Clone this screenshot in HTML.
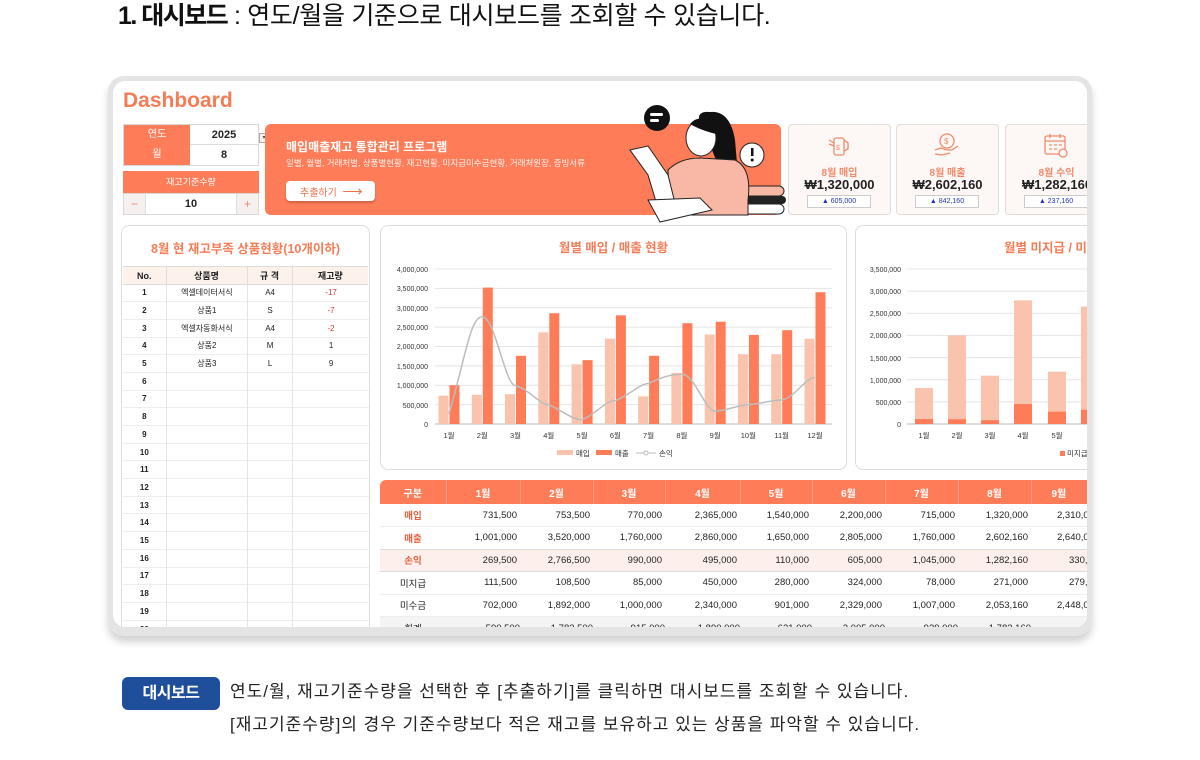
<!DOCTYPE html>
<html><head><meta charset="utf-8">
<style>
*{margin:0;padding:0;box-sizing:border-box}
body{width:1200px;height:760px;background:#fff;position:relative;overflow:hidden;font-family:"Liberation Sans","Noto Sans CJK KR",sans-serif;color:#222}
.a{position:absolute}
.t{position:absolute;white-space:nowrap}
.or{background:#ff7c59;color:#fff}
table{border-collapse:collapse}
</style></head><body>

<div class="t" style="left:118px;top:0px;font-size:25px;letter-spacing:-0.3px;line-height:32px;color:#111"><b style="letter-spacing:-1.5px">1. 대시보드</b> : 연도/월을 기준으로 대시보드를 조회할 수 있습니다.</div>

<!-- frame -->
<div class="a" style="left:108px;top:76px;width:984px;height:560px;border-radius:16px;background:#e4e4e4;box-shadow:0 6px 8px rgba(0,0,0,.18)"></div>
<div class="a" style="left:113px;top:81px;width:974px;height:546px;border-radius:12px;background:#fff;overflow:hidden">
<div class="a" style="left:-113px;top:-81px;width:1200px;height:760px">

<div class="t" style="left:123px;top:87px;font-size:21px;font-weight:bold;color:#f47c57;line-height:28px">Dashboard</div>

<!-- selectors -->
<div class="a" style="left:123px;top:124px;width:136px;height:42px;border:1px solid #d8d8d8"></div>
<div class="t or" style="left:124px;top:125px;width:66px;height:20px;font-size:10px;text-align:center;line-height:20px">연도</div>
<div class="t or" style="left:124px;top:145px;width:66px;height:20px;font-size:10px;text-align:center;line-height:20px">월</div>
<div class="t" style="left:190px;top:125px;width:68px;height:20px;font-size:11px;font-weight:bold;text-align:center;line-height:20px;border-bottom:1px solid #ddd">2025</div>
<div class="t" style="left:190px;top:145px;width:68px;height:20px;font-size:11px;font-weight:bold;text-align:center;line-height:20px">8</div>
<div class="a" style="left:259px;top:133px;width:10px;height:10px;border:1px solid #aaa;background:#f3f3f3;font-size:6px;line-height:8px;text-align:center;color:#555">▾</div>
<div class="t or" style="left:123px;top:171px;width:136px;height:22px;font-size:9px;text-align:center;line-height:22px">재고기준수량</div>
<div class="a" style="left:123px;top:193px;width:136px;height:22px;border:1px solid #d8d8d8"></div>
<div class="t" style="left:124px;top:194px;width:22px;height:20px;background:#f6f0ee;color:#e88;text-align:center;line-height:20px;font-size:12px;border-right:1px solid #ddd">−</div>
<div class="t" style="left:236px;top:194px;width:22px;height:20px;background:#f6f0ee;color:#e88;text-align:center;line-height:20px;font-size:12px;border-left:1px solid #ddd">+</div>
<div class="t" style="left:146px;top:194px;width:90px;height:20px;font-size:11px;font-weight:bold;text-align:center;line-height:20px">10</div>

<!-- banner -->
<div class="a" style="left:265px;top:124px;width:516px;height:91px;background:#ff7c59;border-radius:6px"></div>
<div class="t" style="left:286px;top:138px;color:#fff;font-size:12px;font-weight:bold">매입매출재고 통합관리 프로그램</div>
<div class="t" style="left:286px;top:157px;color:#fff;font-size:8.5px;opacity:.9">일별, 월별, 거래처별, 상품별현황, 재고현황, 미지급미수금현황, 거래처원장, 증빙서류</div>
<div class="t" style="left:286px;top:181px;width:89px;height:20px;background:#fff;border-radius:4px;color:#f0704a;font-size:10px;line-height:20px;padding-left:14px;box-shadow:0 2px 2px rgba(0,0,0,.2)">추출하기 &nbsp;<span style="font-size:14px">⟶</span></div>
<svg class="a" style="left:620px;top:100px" width="170" height="125" viewBox="620 100 170 125">
 <rect x="742" y="186" width="42" height="10" rx="5" fill="#f9b8a5" stroke="#222"/>
 <rect x="746" y="196" width="40" height="8" rx="4" fill="#222"/>
 <rect x="742" y="204" width="42" height="10" rx="5" fill="#fff" stroke="#222"/>
 <path d="M706 135 Q690 110 710 112 Q730 110 735 140 L738 175 L720 170 Z" fill="#111"/>
 <path d="M668 170 Q680 158 700 158 L735 160 Q752 168 748 200 L748 215 L670 215 Z" fill="#f9b8a5" stroke="#222"/>
 <ellipse cx="701" cy="138" rx="15" ry="18" fill="#fff" stroke="#222"/>
 <path d="M690 124 Q700 112 716 126 L716 134 Q700 130 690 124Z" fill="#111"/>
 <path d="M630 150 L648 146 L668 175 L678 215 L660 215 L648 175 Z" fill="#fff" stroke="#222"/>
 <path d="M648 200 L700 198 L712 210 L660 222 Z" fill="#fff" stroke="#222"/>
 <circle cx="657" cy="118" r="13" fill="#111"/>
 <rect x="650" y="113" width="13" height="3" rx="1.5" fill="#fff"/><rect x="650" y="119" width="9" height="3" rx="1.5" fill="#fff"/>
 <circle cx="752" cy="155" r="12" fill="#fff" stroke="#222"/>
 <rect x="751" y="148" width="2.5" height="8" fill="#111"/><circle cx="752.2" cy="160" r="1.5" fill="#111"/>
</svg>

<!-- cards -->
<div class="a" style="left:788px;top:124px;width:103px;height:91px;background:#fdf8f6;border:1px solid #e3dcd8;border-radius:4px"></div>
<div class="a" style="left:896px;top:124px;width:103px;height:91px;background:#fdf8f6;border:1px solid #e3dcd8;border-radius:4px"></div>
<div class="a" style="left:1005px;top:124px;width:103px;height:91px;background:#fdf8f6;border:1px solid #e3dcd8;border-radius:4px"></div>
<svg class="a" style="left:826px;top:132px" width="26" height="26" viewBox="0 0 26 26" fill="none" stroke="#f28a6a" stroke-width="1.3"><rect x="8" y="6" width="10" height="17" rx="2"/><path d="M3 8l5 3M3 12l5 2M18 8l4 3v6l-4 2"/><text x="10" y="18" font-size="7" fill="#f28a6a" stroke="none">$</text></svg>
<svg class="a" style="left:933px;top:132px" width="28" height="26" viewBox="0 0 28 26" fill="none" stroke="#f28a6a" stroke-width="1.3"><circle cx="14" cy="9" r="7"/><text x="11" y="12" font-size="8" fill="#f28a6a" stroke="none">$</text><path d="M2 18l6-2 6 2h5l6-4M2 22l7 1 8-2"/></svg>
<svg class="a" style="left:1042px;top:132px" width="28" height="28" viewBox="0 0 28 28" fill="none" stroke="#f28a6a" stroke-width="1.3"><rect x="3" y="4" width="20" height="18" rx="2"/><path d="M3 9h20M8 2v4M18 2v4M7 13h3M12 13h3M17 13h3M7 17h3M12 17h3"/><circle cx="21" cy="21" r="4" fill="#fdf8f6"/></svg>
<div class="t" style="left:788px;top:164px;width:103px;text-align:center;font-size:10px;font-weight:bold;color:#f28a6a">8월 매입</div>
<div class="t" style="left:896px;top:164px;width:103px;text-align:center;font-size:10px;font-weight:bold;color:#f28a6a">8월 매출</div>
<div class="t" style="left:1005px;top:164px;width:103px;text-align:center;font-size:10px;font-weight:bold;color:#f28a6a">8월 수익</div>
<div class="t" style="left:788px;top:177px;width:103px;text-align:center;font-size:13px;font-weight:bold">₩1,320,000</div>
<div class="t" style="left:896px;top:177px;width:103px;text-align:center;font-size:13px;font-weight:bold">₩2,602,160</div>
<div class="t" style="left:1007px;top:177px;width:103px;text-align:left;font-size:13px;font-weight:bold;padding-left:15px">₩1,282,160</div>
<div class="t" style="left:807px;top:195px;width:64px;height:13px;border:1px solid #ccc;background:#fff;font-size:7px;line-height:11px;text-align:center;color:#2233bb">▲ 605,000</div>
<div class="t" style="left:915px;top:195px;width:64px;height:13px;border:1px solid #ccc;background:#fff;font-size:7px;line-height:11px;text-align:center;color:#2233bb">▲ 842,160</div>
<div class="t" style="left:1024px;top:195px;width:64px;height:13px;border:1px solid #ccc;background:#fff;font-size:7px;line-height:11px;text-align:center;color:#2233bb">▲ 237,160</div>

<!-- left panel -->
<div class="a" style="left:121px;top:225px;width:249px;height:410px;border:1px solid #ddd;border-radius:8px;background:#fff;overflow:hidden">
 <div class="t" style="left:0;top:12px;width:247px;text-align:center;font-size:12.5px;font-weight:bold;color:#f47c57">8월 현 재고부족 상품현황(10개이하)</div>
 <table class="a" style="left:1px;top:40px;font-size:8px;text-align:center">
  <colgroup><col style="width:43px"><col style="width:81px"><col style="width:45px"><col style="width:76px"></colgroup>
  <tr style="height:18px;background:#fdf1ec;font-weight:bold;font-size:9px;border-top:1px solid #ddd;border-bottom:1px solid #ddd"><td style="border-right:1px solid #ddd">No.</td><td style="border-right:1px solid #ddd">상품명</td><td style="border-right:1px solid #ddd">규 격</td><td>재고량</td></tr>
 </table>
 <div class="a" style="left:1px;top:58px;width:246px">
 <table style="font-size:8px;text-align:center;width:246px">
  <colgroup><col style="width:43px"><col style="width:81px"><col style="width:45px"><col style="width:76px"></colgroup>
  <tr style="height:17.7px"><td><b>1</b></td><td style="border-left:1px solid #e5e5e5">엑셀데이터서식</td><td style="border-left:1px solid #e5e5e5">A4</td><td style="border-left:1px solid #e5e5e5;color:#d33">-17</td></tr>
  <tr style="height:17.7px;border-top:1px solid #eee"><td><b>2</b></td><td style="border-left:1px solid #e5e5e5">상품1</td><td style="border-left:1px solid #e5e5e5">S</td><td style="border-left:1px solid #e5e5e5;color:#d33">-7</td></tr>
  <tr style="height:17.7px;border-top:1px solid #eee"><td><b>3</b></td><td style="border-left:1px solid #e5e5e5">엑셀자동화서식</td><td style="border-left:1px solid #e5e5e5">A4</td><td style="border-left:1px solid #e5e5e5;color:#d33">-2</td></tr>
  <tr style="height:17.7px;border-top:1px solid #eee"><td><b>4</b></td><td style="border-left:1px solid #e5e5e5">상품2</td><td style="border-left:1px solid #e5e5e5">M</td><td style="border-left:1px solid #e5e5e5">1</td></tr>
  <tr style="height:17.7px;border-top:1px solid #eee"><td><b>5</b></td><td style="border-left:1px solid #e5e5e5">상품3</td><td style="border-left:1px solid #e5e5e5">L</td><td style="border-left:1px solid #e5e5e5">9</td></tr>
  <tr style="height:17.7px;border-top:1px solid #eee"><td><b>6</b></td><td style="border-left:1px solid #e5e5e5"></td><td style="border-left:1px solid #e5e5e5"></td><td style="border-left:1px solid #e5e5e5"></td></tr>
  <tr style="height:17.7px;border-top:1px solid #eee"><td><b>7</b></td><td style="border-left:1px solid #e5e5e5"></td><td style="border-left:1px solid #e5e5e5"></td><td style="border-left:1px solid #e5e5e5"></td></tr>
  <tr style="height:17.7px;border-top:1px solid #eee"><td><b>8</b></td><td style="border-left:1px solid #e5e5e5"></td><td style="border-left:1px solid #e5e5e5"></td><td style="border-left:1px solid #e5e5e5"></td></tr>
  <tr style="height:17.7px;border-top:1px solid #eee"><td><b>9</b></td><td style="border-left:1px solid #e5e5e5"></td><td style="border-left:1px solid #e5e5e5"></td><td style="border-left:1px solid #e5e5e5"></td></tr>
  <tr style="height:17.7px;border-top:1px solid #eee"><td><b>10</b></td><td style="border-left:1px solid #e5e5e5"></td><td style="border-left:1px solid #e5e5e5"></td><td style="border-left:1px solid #e5e5e5"></td></tr>
  <tr style="height:17.7px;border-top:1px solid #eee"><td><b>11</b></td><td style="border-left:1px solid #e5e5e5"></td><td style="border-left:1px solid #e5e5e5"></td><td style="border-left:1px solid #e5e5e5"></td></tr>
  <tr style="height:17.7px;border-top:1px solid #eee"><td><b>12</b></td><td style="border-left:1px solid #e5e5e5"></td><td style="border-left:1px solid #e5e5e5"></td><td style="border-left:1px solid #e5e5e5"></td></tr>
  <tr style="height:17.7px;border-top:1px solid #eee"><td><b>13</b></td><td style="border-left:1px solid #e5e5e5"></td><td style="border-left:1px solid #e5e5e5"></td><td style="border-left:1px solid #e5e5e5"></td></tr>
  <tr style="height:17.7px;border-top:1px solid #eee"><td><b>14</b></td><td style="border-left:1px solid #e5e5e5"></td><td style="border-left:1px solid #e5e5e5"></td><td style="border-left:1px solid #e5e5e5"></td></tr>
  <tr style="height:17.7px;border-top:1px solid #eee"><td><b>15</b></td><td style="border-left:1px solid #e5e5e5"></td><td style="border-left:1px solid #e5e5e5"></td><td style="border-left:1px solid #e5e5e5"></td></tr>
  <tr style="height:17.7px;border-top:1px solid #eee"><td><b>16</b></td><td style="border-left:1px solid #e5e5e5"></td><td style="border-left:1px solid #e5e5e5"></td><td style="border-left:1px solid #e5e5e5"></td></tr>
  <tr style="height:17.7px;border-top:1px solid #eee"><td><b>17</b></td><td style="border-left:1px solid #e5e5e5"></td><td style="border-left:1px solid #e5e5e5"></td><td style="border-left:1px solid #e5e5e5"></td></tr>
  <tr style="height:17.7px;border-top:1px solid #eee"><td><b>18</b></td><td style="border-left:1px solid #e5e5e5"></td><td style="border-left:1px solid #e5e5e5"></td><td style="border-left:1px solid #e5e5e5"></td></tr>
  <tr style="height:17.7px;border-top:1px solid #eee"><td><b>19</b></td><td style="border-left:1px solid #e5e5e5"></td><td style="border-left:1px solid #e5e5e5"></td><td style="border-left:1px solid #e5e5e5"></td></tr>
  <tr style="height:17.7px;border-top:1px solid #eee"><td><b>20</b></td><td style="border-left:1px solid #e5e5e5"></td><td style="border-left:1px solid #e5e5e5"></td><td style="border-left:1px solid #e5e5e5"></td></tr>
 </table></div>
</div>

<!-- chart 1 -->
<div class="a" style="left:380px;top:225px;width:467px;height:245px;border:1px solid #ddd;border-radius:8px;background:#fff"></div>
<div class="t" style="left:380px;top:237px;width:467px;text-align:center;font-size:12.5px;font-weight:bold;color:#f47c57">월별 매입 / 매출 현황</div>
<svg class="a" style="left:0;top:0" width="1200" height="760" font-family="Liberation Sans, Noto Sans CJK KR, sans-serif">
 <g stroke="#e4e4e4" stroke-width="1">
  <line x1="435" x2="832" y1="269" y2="269"/><line x1="435" x2="832" y1="288.4" y2="288.4"/><line x1="435" x2="832" y1="307.8" y2="307.8"/><line x1="435" x2="832" y1="327.1" y2="327.1"/><line x1="435" x2="832" y1="346.5" y2="346.5"/><line x1="435" x2="832" y1="365.9" y2="365.9"/><line x1="435" x2="832" y1="385.3" y2="385.3"/><line x1="435" x2="832" y1="404.6" y2="404.6"/>
 </g>
 <line x1="435" x2="832" y1="424" y2="424" stroke="#bbb"/>
 <g font-size="7" text-anchor="end" fill="#333">
  <text x="428" y="272">4,000,000</text><text x="428" y="291">3,500,000</text><text x="428" y="311">3,000,000</text><text x="428" y="330">2,500,000</text><text x="428" y="349">2,000,000</text><text x="428" y="369">1,500,000</text><text x="428" y="388">1,000,000</text><text x="428" y="408">500,000</text><text x="428" y="427">0</text>
 </g>
 <g fill="#f9c3ae">
  <rect x="438.5" y="395.7" width="10" height="28.3"/><rect x="471.8" y="394.8" width="10" height="29.2"/><rect x="505" y="394.2" width="10" height="29.8"/><rect x="538.3" y="332.4" width="10" height="91.6"/><rect x="571.6" y="364.3" width="10" height="59.7"/><rect x="604.9" y="338.7" width="10" height="85.3"/><rect x="638.1" y="396.3" width="10" height="27.7"/><rect x="671.4" y="372.8" width="10" height="51.2"/><rect x="704.7" y="334.5" width="10" height="89.5"/><rect x="737.9" y="354.2" width="10" height="69.8"/><rect x="771.2" y="354.2" width="10" height="69.8"/><rect x="804.5" y="338.7" width="10" height="85.3"/>
 </g>
 <g fill="#ff7c59">
  <rect x="449.5" y="385.2" width="10" height="38.8"/><rect x="482.8" y="287.6" width="10" height="136.4"/><rect x="516" y="355.8" width="10" height="68.2"/><rect x="549.3" y="313.2" width="10" height="110.8"/><rect x="582.6" y="360.1" width="10" height="63.9"/><rect x="615.9" y="315.3" width="10" height="108.7"/><rect x="649.1" y="355.8" width="10" height="68.2"/><rect x="682.4" y="323.2" width="10" height="100.8"/><rect x="715.7" y="321.7" width="10" height="102.3"/><rect x="748.9" y="334.9" width="10" height="89.1"/><rect x="782.2" y="330.2" width="10" height="93.8"/><rect x="815.5" y="292.2" width="10" height="131.8"/>
 </g>
 <path d="M449 413.6 C465 360 470 316.8 482.3 316.8 C495 316.8 505 385.6 515.5 385.6 C530 390 540 404.8 548.8 404.8 C565 412 572 419.7 582.1 419.7 C595 415 605 400.6 615.4 400.6 C630 395 640 383.5 648.6 383.5 C660 378 670 374.3 681.9 374.3 C695 374.3 705 411.2 715.2 411.2 C725 411 740 404.6 748.4 404.6 C760 404 772 400 781.7 400 C795 398 805 377.5 815 377.5" fill="none" stroke="#bdbdbd" stroke-width="1.5"/>
 <g font-size="7.5" text-anchor="middle" fill="#333">
  <text x="449" y="438">1월</text><text x="482.3" y="438">2월</text><text x="515.5" y="438">3월</text><text x="548.8" y="438">4월</text><text x="582.1" y="438">5월</text><text x="615.4" y="438">6월</text><text x="648.6" y="438">7월</text><text x="681.9" y="438">8월</text><text x="715.2" y="438">9월</text><text x="748.4" y="438">10월</text><text x="781.7" y="438">11월</text><text x="815" y="438">12월</text>
 </g>
 <rect x="557" y="450" width="16" height="5" fill="#f9c3ae"/><text x="576" y="456" font-size="7.5" fill="#333">매입</text>
 <rect x="596" y="450" width="16" height="5" fill="#ff7c59"/><text x="615" y="456" font-size="7.5" fill="#333">매출</text>
 <line x1="636" x2="656" y1="453" y2="453" stroke="#bbb"/><circle cx="646" cy="453" r="2" fill="#fff" stroke="#bbb"/><text x="659" y="456" font-size="7.5" fill="#333">손익</text>
</svg>

<!-- chart 2 -->
<div class="a" style="left:855px;top:225px;width:260px;height:245px;border:1px solid #ddd;border-radius:8px;background:#fff"></div>
<div class="t" style="left:1004px;top:237px;font-size:12.5px;font-weight:bold;color:#f47c57">월별 미지급 / 미수금 현황</div>
<svg class="a" style="left:0;top:0" width="1200" height="760" font-family="Liberation Sans, Noto Sans CJK KR, sans-serif">
 <g stroke="#e4e4e4"><line x1="907" x2="1100" y1="269" y2="269"/><line x1="907" x2="1100" y1="291.1" y2="291.1"/><line x1="907" x2="1100" y1="313.3" y2="313.3"/><line x1="907" x2="1100" y1="335.4" y2="335.4"/><line x1="907" x2="1100" y1="357.6" y2="357.6"/><line x1="907" x2="1100" y1="379.7" y2="379.7"/><line x1="907" x2="1100" y1="401.9" y2="401.9"/></g>
 <line x1="907" x2="1100" y1="424" y2="424" stroke="#bbb"/>
 <g font-size="7" text-anchor="end" fill="#333"><text x="901" y="272">3,500,000</text><text x="901" y="294">3,000,000</text><text x="901" y="316">2,500,000</text><text x="901" y="338">2,000,000</text><text x="901" y="361">1,500,000</text><text x="901" y="383">1,000,000</text><text x="901" y="405">500,000</text><text x="901" y="427">0</text></g>
 <g fill="#f9c3ae"><rect x="915" y="388.1" width="18" height="35.9"/><rect x="948" y="335.4" width="18" height="88.6"/><rect x="981" y="375.7" width="18" height="48.3"/><rect x="1014" y="300.4" width="18" height="123.6"/><rect x="1048" y="371.7" width="18" height="52.3"/><rect x="1081" y="306.6" width="18" height="117.4"/></g>
 <g fill="#ff7c59"><rect x="915" y="419.1" width="18" height="4.9"/><rect x="948" y="419.2" width="18" height="4.8"/><rect x="981" y="420.2" width="18" height="3.8"/><rect x="1014" y="404.1" width="18" height="19.9"/><rect x="1048" y="411.6" width="18" height="12.4"/><rect x="1081" y="409.7" width="18" height="14.3"/></g>
 <g font-size="7.5" text-anchor="middle" fill="#333"><text x="924" y="438">1월</text><text x="957" y="438">2월</text><text x="990" y="438">3월</text><text x="1023" y="438">4월</text><text x="1057" y="438">5월</text></g>
 <rect x="1060" y="451" width="5" height="5" fill="#ff7c59"/><text x="1067" y="456" font-size="7.5" fill="#333">미지급</text>
</svg>

<!-- bottom table -->
<div class="a" style="left:380px;top:480px;width:720px;height:160px;border-radius:6px 0 0 0;overflow:hidden;background:#fff">
<table style="font-size:9.5px;width:720px;table-layout:fixed;text-align:right">
 <colgroup><col style="width:66px"><col style="width:74px"><col style="width:73px"><col style="width:72px"><col style="width:75px"><col style="width:72px"><col style="width:73px"><col style="width:73px"><col style="width:73px"><col style="width:89px"></colgroup>
 <tr style="height:24px;background:#ff7c59;color:#fff;text-align:center;font-weight:bold;font-size:10px"><td>구분</td><td style="border-left:1px solid #ff9a7e">1월</td><td style="border-left:1px solid #ff9a7e">2월</td><td style="border-left:1px solid #ff9a7e">3월</td><td style="border-left:1px solid #ff9a7e">4월</td><td style="border-left:1px solid #ff9a7e">5월</td><td style="border-left:1px solid #ff9a7e">6월</td><td style="border-left:1px solid #ff9a7e">7월</td><td style="border-left:1px solid #ff9a7e">8월</td><td style="border-left:1px solid #ff9a7e;text-align:left;padding-left:20px">9월</td></tr>
 <tr style="height:22.5px;border-bottom:1px solid #eee"><td style="text-align:center;color:#e8603c;font-weight:bold">매입</td><td style="padding-right:3px">731,500</td><td style="padding-right:3px">753,500</td><td style="padding-right:3px">770,000</td><td style="padding-right:3px">2,365,000</td><td style="padding-right:3px">1,540,000</td><td style="padding-right:3px">2,200,000</td><td style="padding-right:3px">715,000</td><td style="padding-right:3px">1,320,000</td><td style="text-align:left;padding-left:26px">2,310,000</td></tr>
 <tr style="height:22.5px;border-bottom:1px solid #ddd"><td style="text-align:center;color:#e8603c;font-weight:bold">매출</td><td style="padding-right:3px">1,001,000</td><td style="padding-right:3px">3,520,000</td><td style="padding-right:3px">1,760,000</td><td style="padding-right:3px">2,860,000</td><td style="padding-right:3px">1,650,000</td><td style="padding-right:3px">2,805,000</td><td style="padding-right:3px">1,760,000</td><td style="padding-right:3px">2,602,160</td><td style="text-align:left;padding-left:26px">2,640,000</td></tr>
 <tr style="height:22.5px;background:#fdf0ec;border-bottom:1px solid #ddd"><td style="text-align:center;color:#e8603c;font-weight:bold">손익</td><td style="padding-right:3px">269,500</td><td style="padding-right:3px">2,766,500</td><td style="padding-right:3px">990,000</td><td style="padding-right:3px">495,000</td><td style="padding-right:3px">110,000</td><td style="padding-right:3px">605,000</td><td style="padding-right:3px">1,045,000</td><td style="padding-right:3px">1,282,160</td><td style="text-align:left;padding-left:38px">330,000</td></tr>
 <tr style="height:22.5px;border-bottom:1px solid #eee"><td style="text-align:center">미지급</td><td style="padding-right:3px">111,500</td><td style="padding-right:3px">108,500</td><td style="padding-right:3px">85,000</td><td style="padding-right:3px">450,000</td><td style="padding-right:3px">280,000</td><td style="padding-right:3px">324,000</td><td style="padding-right:3px">78,000</td><td style="padding-right:3px">271,000</td><td style="text-align:left;padding-left:38px">279,000</td></tr>
 <tr style="height:22.5px;border-bottom:1px solid #eee"><td style="text-align:center">미수금</td><td style="padding-right:3px">702,000</td><td style="padding-right:3px">1,892,000</td><td style="padding-right:3px">1,000,000</td><td style="padding-right:3px">2,340,000</td><td style="padding-right:3px">901,000</td><td style="padding-right:3px">2,329,000</td><td style="padding-right:3px">1,007,000</td><td style="padding-right:3px">2,053,160</td><td style="text-align:left;padding-left:26px">2,448,000</td></tr>
 <tr style="height:22.5px;background:#f4f4f4"><td style="text-align:center">회계</td><td>590,500</td><td>1,783,500</td><td>915,000</td><td>1,890,000</td><td>621,000</td><td>2,005,000</td><td>929,000</td><td>1,782,160</td><td></td></tr>
</table></div>

</div></div>

<!-- footer -->
<div class="t" style="left:122px;top:677px;width:98px;height:33px;background:#1f4e9a;color:#fff;border-radius:6px;font-size:16px;font-weight:bold;text-align:center;line-height:33px;letter-spacing:-0.5px">대시보드</div>
<div class="t" style="left:230px;top:680px;font-size:17px;letter-spacing:1px;line-height:24px;color:#222">연도/월, 재고기준수량을 선택한 후 [추출하기]를 클릭하면 대시보드를 조회할 수 있습니다.</div>
<div class="t" style="left:230px;top:713px;font-size:17px;letter-spacing:1px;line-height:24px;color:#222">[재고기준수량]의 경우 기준수량보다 적은 재고를 보유하고 있는 상품을 파악할 수 있습니다.</div>
</body></html>
